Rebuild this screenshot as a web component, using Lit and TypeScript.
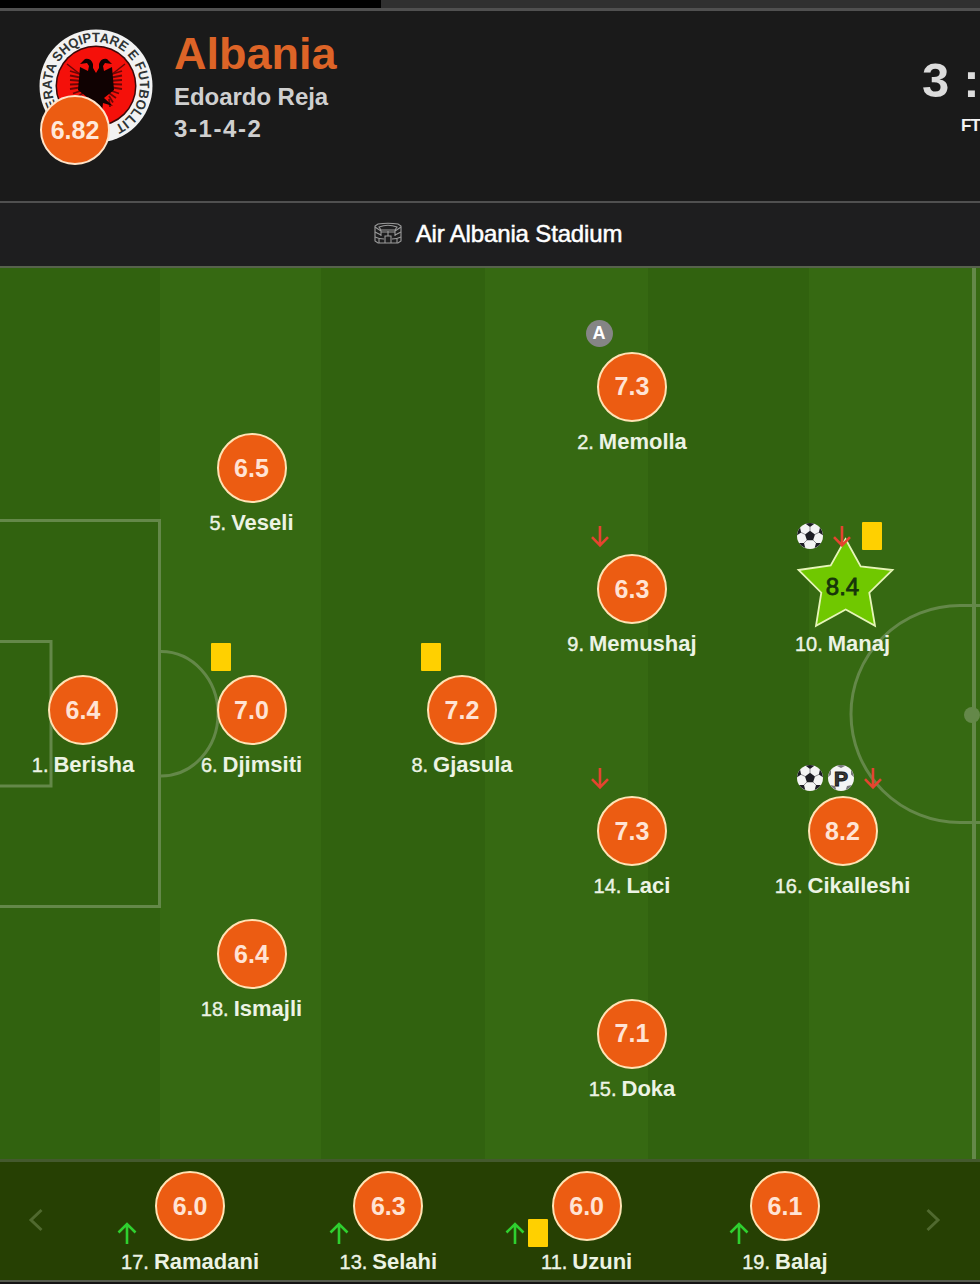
import { LitElement, html, css, svg, nothing } from "lit";
import { customElement, property } from "lit/decorators.js";

type EventKind = "assist" | "out" | "in" | "goal" | "penalty" | "yellow";

interface Player {
  no: number;
  name: string;
  rating: string;
  events?: EventKind[];
}
interface Starter extends Player {
  x: number;
  y: number;
  best?: boolean;
}
interface Sub extends Player {
  shift: number;
}

const STARTERS: Starter[] = [
  { no: 1, name: "Berisha", rating: "6.4", x: 83, y: 442 },
  { no: 5, name: "Veseli", rating: "6.5", x: 251.5, y: 200 },
  { no: 6, name: "Djimsiti", rating: "7.0", x: 251.5, y: 442, events: ["yellow"] },
  { no: 18, name: "Ismajli", rating: "6.4", x: 251.5, y: 686 },
  { no: 8, name: "Gjasula", rating: "7.2", x: 462, y: 442, events: ["yellow"] },
  { no: 2, name: "Memolla", rating: "7.3", x: 632, y: 118.5, events: ["assist"] },
  { no: 9, name: "Memushaj", rating: "6.3", x: 632, y: 321, events: ["out"] },
  { no: 14, name: "Laci", rating: "7.3", x: 632, y: 563, events: ["out"] },
  { no: 15, name: "Doka", rating: "7.1", x: 632, y: 765.5, events: [] },
  { no: 10, name: "Manaj", rating: "8.4", x: 842.5, y: 321, best: true, events: ["goal", "out", "yellow"] },
  { no: 16, name: "Cikalleshi", rating: "8.2", x: 842.5, y: 563, events: ["goal", "penalty", "out"] },
];

const SUBS: Sub[] = [
  { no: 17, name: "Ramadani", rating: "6.0", events: ["in"], shift: -53 },
  { no: 13, name: "Selahi", rating: "6.3", events: ["in"], shift: -39 },
  { no: 11, name: "Uzuni", rating: "6.0", events: ["in", "yellow"], shift: -39 },
  { no: 19, name: "Balaj", rating: "6.1", events: ["in"], shift: -36 },
];

const ballPatches = svg`
  <circle cx="14" cy="14" r="13" fill="#f4f4f4"/>
  <g fill="#1d1d24">
    <path d="M14 8.8l5 3.6-1.9 5.8h-6.2L9 12.4z"/>
    <path d="M9.6 1.8Q14 .2 18.4 1.8L14 5z"/>
    <path d="M24 5.6q2.6 3.4 3 7.6l-4.2-2.6z"/>
    <path d="M4 5.6Q1.400 9 1 13.200l4.200-2.600z"/>
    <path d="M25 21q-2.600 3.800-6.300 5.100l1.300-5z"/>
    <path d="M3 21q2.600 3.800 6.300 5.100l-1.300-5z"/>
  </g>
  <g stroke="#77777c" stroke-width=".8">
    <path d="M14 9V5M19 12.400l4-2M9 12.400l-4-2M17 18l3 3M11 18l-3 3"/>
  </g>`;

@customElement("event-icon")
export class EventIcon extends LitElement {
  @property() kind: EventKind = "goal";

  static styles = css`
    :host { display: flex; align-items: center; justify-content: center; height: 28px; }
    svg { display: block; }
    .card { width: 20px; height: 28px; background: #ffd000; border-radius: 1px; }
    .assist {
      width: 27px; height: 27px; border-radius: 50%; background: #858585; color: #fff;
      font-weight: 700; font-size: 18px; line-height: 27px; text-align: center;
    }
  `;

  render() {
    switch (this.kind) {
      case "yellow":
        return html`<div class="card"></div>`;
      case "assist":
        return html`<div class="assist">A</div>`;
      case "out":
        return html`<svg width="20" height="24" viewBox="0 0 20 24" fill="none" stroke="#e5442f" stroke-width="2.600">
          <path d="M11 2v19M3 13.200L11 21.500l8-8.300"/></svg>`;
      case "in":
        return html`<svg width="20" height="24" viewBox="0 0 20 24" fill="none" stroke="#2fd02f" stroke-width="2.600">
          <path d="M10 23V3M1.500 11.500L10 3l8.500 8.500"/></svg>`;
      case "penalty":
        return html`<svg width="28" height="28" viewBox="0 0 28 28">
          <circle cx="14" cy="14" r="13" fill="#f4f4f4"/>
          <g fill="#77777b"><path d="M9.600 1.800Q14 .200 18.400 1.800L14 4z"/><path d="M24 5.600q2.600 3.400 3 7.600l-3-2.600z"/>
          <path d="M4 5.600Q1.400 9 1 13.200l3-2.600z"/><path d="M25 21q-2.600 3.800-6.300 5.100l1.300-4z"/><path d="M3 21q2.600 3.800 6.300 5.100L8 22z"/></g>
          <text x="14" y="21.500" text-anchor="middle" font-weight="700" font-size="21" fill="#3a3a3a" stroke="#161616" stroke-width="1">P</text></svg>`;
      default:
        return html`<svg width="28" height="28" viewBox="0 0 28 28">${ballPatches}</svg>`;
    }
  }
}

@customElement("player-mark")
export class PlayerMark extends LitElement {
  @property({ attribute: false }) player!: Player;
  @property({ type: Boolean }) best = false;

  static styles = css`
    :host { display: flex; flex-direction: column; align-items: center; width: 190px; }
    .disc {
      box-sizing: border-box; width: 70px; height: 70px; border-radius: 50%;
      border: 2px solid #ffe3b4; background: #ec5c12; color: #ffe3d4;
      display: flex; align-items: center; justify-content: center;
      font-weight: 700; font-size: 25px; line-height: 1;
    }
    .star { position: relative; border-color: transparent; background: none; color: #16350a; }
    .star svg { position: absolute; left: -21px; top: -22px; }
    .star span { position: relative; top: -2px; font-weight: 400; font-size: 24px; -webkit-text-stroke: 0.8px #16350a; }
    .label {
      display: flex; align-items: baseline; gap: 5px; margin-top: var(--label-gap, 8px); height: 24px;
      line-height: 24px; color: #ecf3e4; white-space: nowrap;
    }
    .no { font-size: 20px; -webkit-text-stroke: 0.4px #ecf3e4; }
    .name { font-size: 22px; font-weight: 700; }
  `;

  render() {
    const p = this.player;
    return html`
      <div class="disc ${this.best ? "star" : ""}">
        ${this.best
          ? html`<svg width="106" height="100" viewBox="789 534 106 100">
              <path d="M845.500 539L860.700 566.500L892.500 570L869.300 592.700L875 625.800L845.700 609.500L816 625.800L821.300 592.700L798.500 570L830.700 565.500Z"
                fill="#70c800" stroke="#e6f5b8" stroke-width="1.800"/></svg>`
          : nothing}
        <span>${p.rating}</span>
      </div>
      <div class="label"><span class="no">${p.no}.</span><span class="name">${p.name}</span></div>
    `;
  }
}

@customElement("app-root")
export class AppRoot extends LitElement {
  static styles = css`
    :host {
      display: block; width: 980px; height: 1284px; overflow: hidden; background: #1a1a1a;
      font-family: "Liberation Sans", Arial, sans-serif;
    }
    .page { display: flex; flex-direction: column; height: 1284px; }
    .tabs { display: flex; height: 8px; background: #303030; border-bottom: 3px solid #505050; flex: none; }
    .tab { width: 381px; background: #000; }
    .head {
      display: flex; flex: none; height: 192px; box-sizing: border-box; padding: 18px 0 0 39px;
      border-bottom: 2px solid #505050;
    }
    .crest { position: relative; width: 114px; height: 114px; margin-right: 21px; }
    .crest svg { display: block; }
    .avg {
      position: absolute; left: 1px; top: 66px; width: 70px; height: 70px; box-sizing: border-box;
      border: 2px solid #ffe3c8; border-radius: 50%; background: #ec5c12; color: #ffe8da;
      font-weight: 700; font-size: 25px; line-height: 67px; text-align: center;
    }
    .team { flex: 1; font-weight: 700; color: #cfcfcf; font-size: 24px; }
    .country { color: #dd6427; font-size: 45px; line-height: 50px; }
    .coach { line-height: 32px; margin-top: 2px; font-size: 24px; letter-spacing: -0.05px; }
    .shape { line-height: 32px; letter-spacing: 1.600px; }
    .score { width: 58px; white-space: nowrap; font-weight: 700; color: #dcdcdc; padding-top: 23px; }
    .goals { font-size: 49px; line-height: 56px; display: flex; gap: 14px; }
    .time { font-size: 17px; line-height: 20px; padding: 8px 0 0 39px; letter-spacing: -0.8px; color: #f4f4f4; }
    .venue {
      display: flex; flex: none; align-items: center; justify-content: center; gap: 14px; height: 65px; box-sizing: border-box;
      background: #1e1e1f; border-bottom: 2px solid #57624c; color: #fff; font-size: 24px; padding: 0 0 2px 16px;
      letter-spacing: -0.15px; -webkit-text-stroke: 0.500px #fff;
    }
    .pitch {
      position: relative; flex: none; height: 891px;
      background: linear-gradient(90deg, #31620f 160px, #366912 160px 321px, #31620f 321px 485px,
        #366912 485px 648px, #31620f 648px 809px, #366912 809px);
    }
    .lines { display: block; }
    .player { position: absolute; width: 190px; transform: translate(-95px, -35px); }
    .events { position: absolute; left: 48px; top: -32px; display: grid; grid-auto-flow: column; grid-auto-columns: 28px; gap: 3px; z-index: 1; }
    .events event-icon[kind="yellow"]:first-child { margin-left: 4px; }
    .bench {
      display: flex; flex: none; height: 123px; box-sizing: border-box; background: #264003;
      border-top: 3px solid #44592e; border-bottom: 2px solid #555b4e; padding: 9px 37px 0 27px; justify-content: space-between;
    }
    .subs { display: flex; gap: 8.300px; margin-left: 5px; --label-gap: 9px; }
    .sub { position: relative; width: 190px; }
    .subevents { position: absolute; top: 48px; display: flex; gap: 3px; }
    .chev { margin-top: 37px; width: 20px; height: 24px; flex: none; }
    .foot { flex: 1; background: #151515; }
  `;

  private crest() {
    const feathers = [0, 1, 2, 3, 4, 5, 6, 7, 8];
    return html`<svg width="114" height="114" viewBox="0 0 114 114">
      <defs><path id="ring" d="M18 77.500A44 44 0 1 1 77 96.200"/></defs>
      <circle cx="57" cy="57" r="56.500" fill="#f2f2f2"/>
      <circle cx="57" cy="57" r="40.500" fill="#3a0808"/>
      <circle cx="57" cy="57" r="39" fill="#f5100a"/>
      <text font-size="13.500" font-weight="700" fill="#2f3434"><textPath href="#ring" textLength="209" lengthAdjust="spacingAndGlyphs">ERATA SHQIPTARE E FUTBOLLIT</textPath></text>
      <g fill="none" stroke="#6a0606" stroke-width="1.800">
        ${feathers.map((i) => svg`<path d="M44 ${46 + i * 3}L${31 + (i > 4 ? (i - 4) * 3 : 0)} ${42 + i * 4.5}M70 ${46 + i * 3}L${83 - (i > 4 ? (i - 4) * 3 : 0)} ${42 + i * 4.5}"/>`)}
        <path d="M28 35l14 11M86 35L72 46" stroke-width="1.500"/>
      </g>
      <path d="M57 44l-3-5V35q-2-6-8-5l-5 5 7-1 2 3-1 5-8-4-2 23 10 8-9 8 10-3 1 9 6-7 6 7 1-9 10 3-9-8 10-8-2-23-8 4-1-5 2-3 7 1-5-5q-6-1-8 5v4z" fill="#100202"/>
    </svg>`;
  }

  private stadiumIcon() {
    return html`<svg width="28" height="23" viewBox="0 0 28 23" fill="none" stroke="#9b9b9b" stroke-width="1.100">
      <path d="M4 2Q14 .500 24 2L27 4V19L24 21H4L1 19V4Z"/>
      <path d="M5 5Q14 1.500 23 5L21 8H7ZM1 5L7 9V14M27 5L21 9V14M7 10H21M1 10L7 13M27 10L21 13M1 15Q5 17 10 17M27 15Q23 17 18 17"/>
      <path d="M11 21V14H17V21M14 14V9M5 17V21M23 17V21"/>
    </svg>`;
  }

  render() {
    return html`<div class="page">
      <div class="tabs"><div class="tab"></div></div>
      <header class="head">
        <div class="crest">${this.crest()}<div class="avg">6.82</div></div>
        <div class="team">
          <div class="country">Albania</div>
          <div class="coach">Edoardo Reja</div>
          <div class="shape">3-1-4-2</div>
        </div>
        <div class="score">
          <div class="goals"><span>3</span><span>:</span></div>
          <div class="time">FT</div>
        </div>
      </header>
      <div class="venue">${this.stadiumIcon()}<span>Air Albania Stadium</span></div>
      <main class="pitch">
        <svg class="lines" width="980" height="891" viewBox="0 268 980 891" fill="none" stroke="#648849" stroke-width="3">
          <path d="M0 520.500H159.500V906.500H0M0 641.500H51V786H0"/>
          <path d="M161 651.500A57 62.250 0 0 1 161 776"/>
          <path d="M980 605.500H960A109 108.500 0 0 0 960 822.500H980"/>
          <path d="M974 268V1159" stroke-width="4"/>
          <circle cx="972" cy="715" r="8" fill="#648849" stroke="none"/>
        </svg>
        ${STARTERS.map(
          (p) => html`<div class="player" style="left:${p.x}px;top:${p.y}px">
            <player-mark .player=${p} ?best=${!!p.best}></player-mark>
            <div class="events">${(p.events ?? []).map((e) => html`<event-icon kind=${e}></event-icon>`)}</div>
          </div>`
        )}
      </main>
      <section class="bench">
        <svg class="chev" viewBox="0 0 20 24" fill="none" stroke="#50692f" stroke-width="3"><path d="M14.500 2L4 12l10.500 10"/></svg>
        <div class="subs">
          ${SUBS.map(
            (p) => html`<div class="sub">
              <player-mark .player=${p}></player-mark>
              <div class="subevents" style="right:${95 - p.shift}px">
                ${p.events!.map((e) => html`<event-icon kind=${e}></event-icon>`)}
              </div>
            </div>`
          )}
        </div>
        <svg class="chev" viewBox="0 0 20 24" fill="none" stroke="#50692f" stroke-width="3"><path d="M4.500 2L15 12 4.500 22"/></svg>
      </section>
      <div class="foot"></div>
    </div>`;
  }
}
